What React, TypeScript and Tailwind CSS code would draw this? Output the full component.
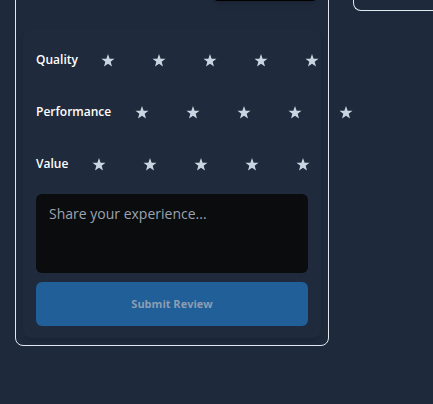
import React from 'react';

const Star: React.FC = () => (
  <svg width="14" height="13" viewBox="0 0 24 23" className="text-slate-300">
    <polygon
      fill="currentColor"
      points="12,0 14.9,8.2 23.5,8.4 16.7,13.7 19.1,22.1 12,17.1 4.9,22.1 7.3,13.7 0.5,8.4 9.1,8.2"
    />
  </svg>
);

const ratings = ['Quality', 'Performance', 'Value'];

export default function App() {
  return (
    <div className="h-[404px] overflow-hidden bg-[#1e293b] font-['Open_Sans',sans-serif]">
      <div className="-mt-[100px] flex items-start gap-[24px] pl-[15px]">
        {/* review card */}
        <div className="w-[314px] shrink-0 rounded-lg border border-slate-200 p-[7px]">
          <div className="flex h-[93px] items-end justify-end pr-[3px]">
            <div className="h-[30px] w-[106px] rounded-md bg-black shadow-md" />
          </div>
          <div className="mt-[28px] rounded-lg bg-[#1f2a3d] px-[13px] pt-[19px] pb-[12px] shadow-md">
            <div className="flex flex-col gap-[28px]">
              {ratings.map((label) => (
                <div key={label} className="flex h-[24px] items-center gap-[10px]">
                  <span className="text-[12px] font-semibold text-white">{label}</span>
                  {[0, 1, 2, 3, 4].map((i) => (
                    <button key={i} className="flex w-[41px] shrink-0 justify-center">
                      <Star />
                    </button>
                  ))}
                </div>
              ))}
            </div>
            <textarea
              placeholder="Share your experience..."
              className="mt-[18px] block h-[79px] w-full resize-none rounded-md bg-[#0b0c0e] px-[13px] py-[9px] text-[14px] text-white placeholder:text-[#9ca3af] outline-none"
            />
            <button
              disabled
              className="mt-[9px] h-[44px] w-full rounded-md bg-[#215f99] text-[11px] font-bold text-[#8d9db2]"
            >
              Submit Review
            </button>
          </div>
        </div>
        {/* next card, mostly scrolled away */}
        <div className="h-[111px] flex-1 rounded-bl-lg border border-r-0 border-slate-200" />
      </div>
    </div>
  );
}
